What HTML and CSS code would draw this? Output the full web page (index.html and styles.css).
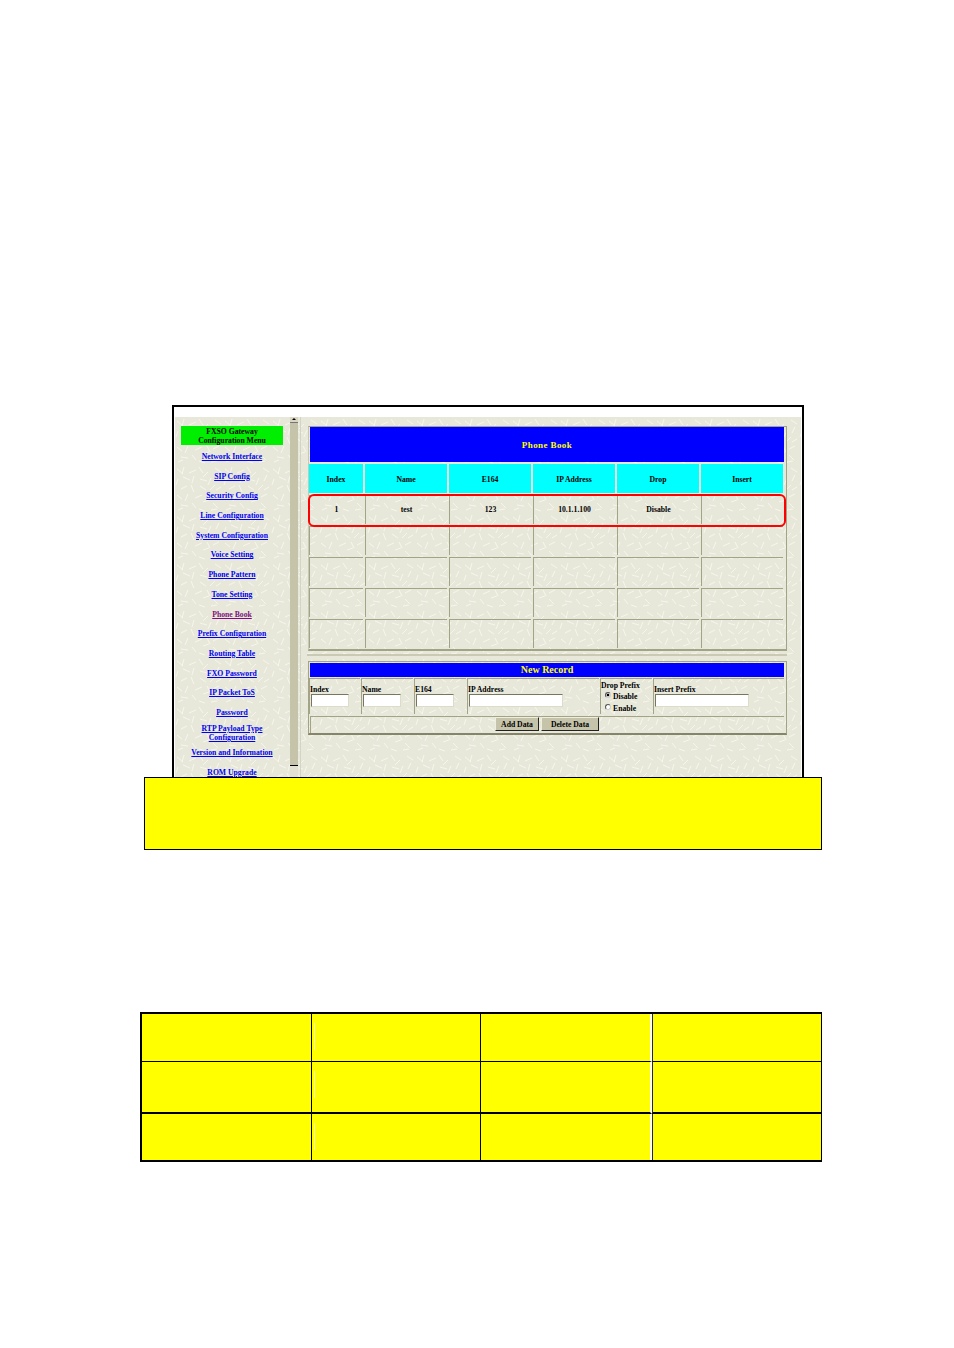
FILE: index.html
```html
<!DOCTYPE html>
<html lang="en">
<head>
    <meta charset="UTF-8">
    <meta name="viewport" content="width=device-width, initial-scale=1.0">
    <title>Phone Book</title>
    <link rel="stylesheet" href="styles.css">
</head>
<body>
    <div class="frame">
        <div class="shot">
            <nav class="sidebar">
                <div class="menu-title">FXSO Gateway<br>Configuration Menu</div>
                <a href="#">Network Interface</a>
                <a href="#">SIP Config</a>
                <a href="#">Security Config</a>
                <a href="#">Line Configuration</a>
                <a href="#">System Configuration</a>
                <a href="#">Voice Setting</a>
                <a href="#">Phone Pattern</a>
                <a href="#">Tone Setting</a>
                <a href="#" class="visited">Phone Book</a>
                <a href="#">Prefix Configuration</a>
                <a href="#">Routing Table</a>
                <a href="#">FXO Password</a>
                <a href="#">IP Packet ToS</a>
                <a href="#">Password</a>
                <a href="#" class="two-line">RTP Payload Type<br>Configuration</a>
                <a href="#" class="after-two-line">Version and Information</a>
                <a href="#">ROM Upgrade</a>
            </nav>

            <div class="scrollbar">
                <div class="scroll-btn"></div>
                <div class="scroll-thumb"></div>
            </div>

            <main class="main">
                <section class="book">
                    <div class="book-title">Phone Book</div>
                    <div class="book-grid">
                        <div class="head">Index</div>
                        <div class="head">Name</div>
                        <div class="head">E164</div>
                        <div class="head">IP Address</div>
                        <div class="head">Drop</div>
                        <div class="head">Insert</div>

                        <div class="cell">1</div>
                        <div class="cell">test</div>
                        <div class="cell">123</div>
                        <div class="cell">10.1.1.100</div>
                        <div class="cell">Disable</div>
                        <div class="cell"></div>

                        <div class="cell"></div><div class="cell"></div><div class="cell"></div><div class="cell"></div><div class="cell"></div><div class="cell"></div>
                        <div class="cell"></div><div class="cell"></div><div class="cell"></div><div class="cell"></div><div class="cell"></div><div class="cell"></div>
                        <div class="cell"></div><div class="cell"></div><div class="cell"></div><div class="cell"></div><div class="cell"></div><div class="cell"></div>
                        <div class="cell"></div><div class="cell"></div><div class="cell"></div><div class="cell"></div><div class="cell"></div><div class="cell"></div>

                        <div class="highlight"></div>
                    </div>
                </section>

                <hr class="divider">

                <section class="record">
                    <div class="record-title">New Record</div>
                    <div class="record-grid">
                        <div class="field"><label>Index</label><input type="text"></div>
                        <div class="field"><label>Name</label><input type="text"></div>
                        <div class="field"><label>E164</label><input type="text"></div>
                        <div class="field"><label>IP Address</label><input type="text" class="wide"></div>
                        <div class="field drop">
                            <label>Drop Prefix</label>
                            <div class="radio"><span class="dot checked"></span>Disable</div>
                            <div class="radio"><span class="dot"></span>Enable</div>
                        </div>
                        <div class="field"><label>Insert Prefix</label><input type="text" class="wide"></div>
                    </div>
                    <div class="actions">
                        <button type="button" class="add">Add Data</button>
                        <button type="button" class="delete">Delete Data</button>
                    </div>
                </section>
            </main>
        </div>
    </div>

    <div class="callout"></div>

    <div class="summary">
        <div class="s-cell"></div><div class="s-cell"></div><div class="s-cell"></div><div class="s-cell"></div>
        <div class="s-cell"></div><div class="s-cell"></div><div class="s-cell"></div><div class="s-cell"></div>
        <div class="s-cell"></div><div class="s-cell"></div><div class="s-cell"></div><div class="s-cell"></div>
    </div>
</body>
</html>
```

FILE: styles.css
```css
:root {
    --paper: #e8e8da;
    --olive: #a3a388;
    --olive-dark: #85856a;
    --face: #c6c3ab;
    --blue: #0000ff;
    --cyan: #00ffff;
    --yellow: #ffff00;
}

* {
    box-sizing: border-box;
}

body {
    margin: 0;
    padding-top: 405px;
    background: #fff;
    font-family: "Liberation Serif", "Times New Roman", serif;
    font-size: 7.7px;
    font-weight: bold;
    line-height: 9px;
    color: #000;
}

/* screenshot inside the document page */
.frame {
    width: 632px;
    height: 372px;
    margin-left: 172px;
    padding: 10px 1px 0;
    border: solid #000;
    border-width: 2px 2px 0 2px;
    overflow: hidden;
}

.shot {
    display: flex;
    height: 360px;
    background-color: var(--paper);
    background-image: url("data:image/svg+xml,%3Csvg xmlns='http://www.w3.org/2000/svg' width='48' height='48'%3E%3Cg stroke='%23f9f9f2' stroke-width='.8' fill='none'%3E%3Cpath d='M2 4l6 5M9 2l-2 7M14 8l7-3M24 2l4 6M33 7l-5 5M40 3l6 4M44 10l-3 6M3 14l-2 6M8 12l7 3M19 11l-2 7M25 14l7 2M36 13l-3 7M6 24l6-3M16 20l3 7M25 21l6 4M40 20l-5 5M46 22l-5 3M2 30l5 4M13 29l-3 7M20 33l7-3M32 29l3 6M44 29l-6 3M6 40l7 1M17 38l4 5M28 37l6-2M38 38l5 5M3 45l5-2M24 44l6 2M36 45l6-1'/%3E%3C/g%3E%3C/svg%3E");
}

.sidebar {
    display: flex;
    flex-direction: column;
    flex: 0 0 115px;
    width: 115px;
    padding: 9px 7px 0 6px;
    text-align: center;
}

.menu-title {
    height: 19px;
    margin-bottom: 7px;
    padding-top: 1px;
    background: #00ee00;
}

.sidebar a {
    margin-bottom: 10.7px;
    color: #0000ee;
    white-space: nowrap;
}

.sidebar a.visited {
    color: #7b0f7b;
}

.sidebar a.two-line {
    margin-top: -3.7px;
    margin-bottom: 6px;
}

.scrollbar {
    flex: 0 0 8px;
    display: flex;
    flex-direction: column;
    background: #e2e0d2;
}

.scroll-btn {
    height: 6px;
    background: #d8d5c2;
    border-bottom: 1px solid #777;
    display: flex;
    justify-content: center;
    padding-top: 1px;
}

/* arrow on the scroll button */
.scroll-btn::before {
    content: "";
    width: 0;
    height: 0;
    border-left: 2px solid transparent;
    border-right: 2px solid transparent;
    border-bottom: 2px solid #000;
}

.scroll-thumb {
    height: 343px;
    background: var(--face);
    border-bottom: 1px solid #000;
}

.main {
    flex: 1;
    margin-left: 2px;
    padding: 9px 0 0 7px;
    border-left: 1px solid #d4d4c2;
}

.book {
    width: 479px;
    padding: 0 2px 1px 0;
    border: solid var(--olive);
    border-width: 1px 1px 2px 1px;
    border-left-color: #c8c8b4;
}

.book-title {
    height: 35px;
    margin-left: 1px;
    background: var(--blue);
    color: var(--yellow);
    font-size: 9px;
    letter-spacing: 0.4px;
    line-height: 37px;
    text-align: center;
}

.book-grid {
    position: relative;
    display: grid;
    grid-template-columns: 54px repeat(5, 82px);
    grid-auto-rows: 29px;
    gap: 2px;
    margin-top: 2px;
}

.head {
    background: var(--cyan);
    line-height: 31px;
    text-align: center;
}

.cell {
    border-top: 1px solid var(--olive);
    border-left: 1px solid var(--olive);
    line-height: 27px;
    padding-bottom: 1px;
    text-align: center;
}

.highlight {
    position: absolute;
    left: -1px;
    top: 30px;
    width: 478px;
    height: 33px;
    border: 2px solid #ff0000;
    border-radius: 6px;
}

.divider {
    width: 480px;
    height: 2px;
    margin: 3px 0 5px -1px;
    border: 0;
    background: #c9c9b4;
}

.record {
    width: 479px;
    padding: 1px 2px 0 0;
    border: solid var(--olive);
    border-width: 1px 1px 2px 1px;
    border-bottom-color: var(--olive-dark);
}

.record-title {
    height: 14px;
    margin-left: 1px;
    background: var(--blue);
    color: var(--yellow);
    font-size: 10px;
    line-height: 14px;
    text-align: center;
}

.record-grid {
    display: grid;
    grid-template-columns: 51px 52px 52px 132px 52px 131px;
    gap: 1px;
    height: 36px;
    margin-top: 1px;
}

.field {
    display: flex;
    flex-direction: column;
    border-top: 1px solid var(--olive);
    border-left: 1px solid var(--olive);
    padding-top: 6px;
}

.field label {
    display: block;
    height: 9px;
    white-space: nowrap;
}

.field input {
    display: block;
    width: 38px;
    height: 13px;
    margin: 0 0 0 1px;
    padding: 0;
    background: #fff;
    border: 1px solid;
    border-color: #77775f #dcdcca #dcdcca #77775f;
    border-radius: 0;
}

.field input.wide {
    width: 94px;
}

.field.drop {
    padding-top: 2px;
}

.radio {
    display: flex;
    align-items: center;
    height: 11px;
    margin-top: 1px;
    padding-left: 4px;
}

.dot {
    width: 6px;
    height: 6px;
    margin-right: 2px;
    margin-top: -3px;
    border: 1px solid;
    border-color: #555 #ccc #ccc #555;
    border-radius: 50%;
    background: #fff;
}

.dot.checked {
    background: radial-gradient(circle, #000 0 1.2px, #fff 1.7px);
}

.actions {
    display: flex;
    height: 17px;
    margin: 2px 0 0 1px;
    padding: 0 0 0 184px;
    gap: 2px;
    border-top: 1px solid var(--olive);
    border-left: 1px solid var(--olive);
}

.actions button {
    height: 14px;
    padding: 0;
    background: var(--face);
    border: 1px solid;
    border-color: #eeeedd #222 #222 #eeeedd;
    border-radius: 0;
    font: inherit;
    color: #000;
}

.actions .add {
    width: 44px;
}

.actions .delete {
    width: 58px;
}

.callout {
    position: relative;
    width: 678px;
    height: 73px;
    margin-left: 144px;
    background: var(--yellow);
    border: 1px solid #000;
}

.summary {
    display: grid;
    grid-template-columns: 170px 169px 171px 169px;
    grid-template-rows: 48px 52px 46px;
    width: 682px;
    margin: 162px 0 0 140px;
    border: solid #000;
    border-width: 2px 1px 2px 2px;
}

.s-cell {
    background: var(--yellow);
    border-right: 1px solid #000;
    border-bottom: 1px solid #000;
}

.s-cell:nth-child(4n) {
    border-left: 1px solid #224;
    border-right: 0;
}

.s-cell:nth-child(4n+3) {
    border-right: 2px solid #fff;
}

.s-cell:nth-child(n+5):nth-child(-n+8) {
    border-bottom-width: 2px;
}

.s-cell:nth-child(n+9) {
    border-bottom: 0;
}

/* faint white tick left in the second column */
.s-cell:nth-child(4n+2)::before {
    content: "";
    display: block;
    width: 1px;
    height: 27px;
    margin: 9px 0 0 2px;
    background: #ffffa8;
}
```
